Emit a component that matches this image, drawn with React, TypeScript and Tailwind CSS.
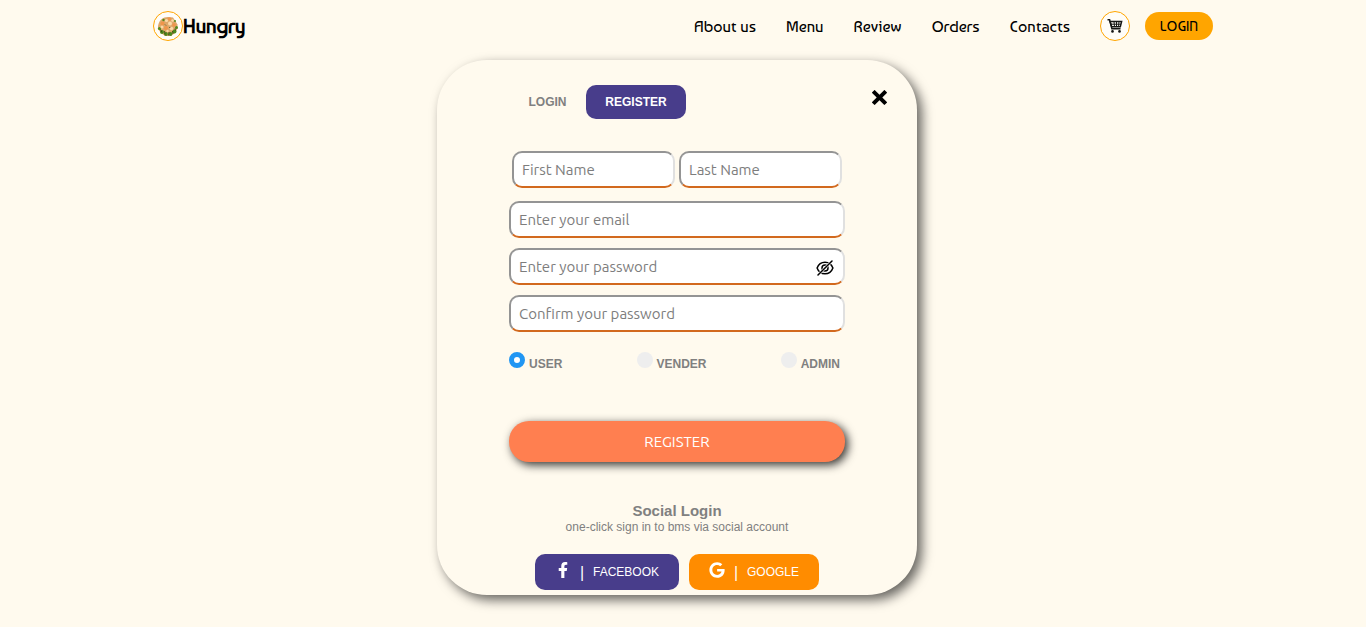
import { useState } from "react";
import { FaFacebookF, FaGoogle } from "react-icons/fa";
import { ImCross } from "react-icons/im";

const navLinks = ["About us", "Menu", "Review", "Orders", "Contacts"];
const roles = ["USER", "VENDER", "ADMIN"];

const field =
  "h-[37px] w-full min-w-0 rounded-[10px] border-2 border-t-[#949494] border-l-[#949494] border-r-[#e0e0e0] border-b-[#d2691e] bg-white px-2 text-[15px] text-black outline-none placeholder:text-[#7d7d7d] placeholder:opacity-100 font-['Ubuntu','Noto_Sans',sans-serif]";

function BowlLogo() {
  return (
    <svg viewBox="0 0 30 30" className="size-[30px] shrink-0" aria-hidden="true">
      <circle cx="15" cy="15" r="14.5" fill="#fffdf8" stroke="#ffa500" />
      <path d="M5 15C6 9 10 6 15 6l5 .5 2 3 2.500 4v4L22 22l-4 3h-6l-4-3-3-4z" fill="#dda76a" />
      <g fill="#4f8a1e">
        <circle cx="6.500" cy="17.500" r="1.600" />
        <circle cx="9" cy="21" r="2" />
        <circle cx="13" cy="23" r="1.900" />
        <circle cx="17.500" cy="23" r="1.900" />
        <circle cx="21.500" cy="20.500" r="2" />
        <circle cx="23.500" cy="16.500" r="1.500" />
        <circle cx="10.500" cy="9" r="1.200" />
        <circle cx="22" cy="10" r="1" />
      </g>
      <g fill="#f0954a">
        <circle cx="9.500" cy="12.500" r="2" />
        <circle cx="16.500" cy="8" r="1.800" />
        <circle cx="21" cy="14" r="1.800" />
        <circle cx="13" cy="17" r="2" />
      </g>
      <g fill="#fbd9a8">
        <circle cx="13.500" cy="9.500" r="1.600" />
        <circle cx="17" cy="12.500" r="2" />
        <circle cx="9" cy="16" r="1.500" />
        <circle cx="18.500" cy="17.500" r="1.700" />
        <circle cx="14.500" cy="20" r="1.200" />
        <circle cx="19.500" cy="9.500" r="1.200" />
      </g>
      <path d="M12 13.500l1 1M16.500 16l.5 1M7.500 18.500l1.500 3M11.500 20l.5 3.500M16 21l-.5 3.500M19.500 20l.5 3M22 17.500l.5 2" stroke="#2c3f10" strokeWidth=".8" />
    </svg>
  );
}

function CartIcon() {
  return (
    <svg viewBox="0 0 16 16" className="size-4" fill="none" stroke="#151515" aria-hidden="true">
      <path d="M.5 1.700h2.100l2.300 9.100h8.600" strokeWidth="1.500" />
      <path d="M3 3.600H14.600L13.300 8.700H4.700z" strokeWidth="1.500" />
      <path d="M3.900 6.200H14M7 3.600l.5 5M9.500 3.600v5M12 3.600l-.5 5" strokeWidth="1" />
      <circle cx="5.500" cy="13.400" r="1.300" fill="#151515" stroke="none" />
      <circle cx="12.500" cy="13.400" r="1.300" fill="#151515" stroke="none" />
    </svg>
  );
}

function EyeOffIcon() {
  return (
    <svg viewBox="0 0 18 16" className="h-4 w-[18px]" fill="none" stroke="#000" strokeWidth="1.500" strokeLinecap="round" aria-hidden="true">
      <path d="M1.100 8C2.500 4.200 5.500 2.200 9 2.200S15.500 4.200 16.900 8C15.500 11.800 12.500 13.800 9 13.800S2.500 11.800 1.100 8z" />
      <circle cx="9" cy="8" r="3" />
      <path d="M3 14L15 2" stroke="#fff" strokeWidth="2.600" />
      <path d="M2 15L16 1" />
    </svg>
  );
}

export default function App() {
  const [role, setRole] = useState("USER");
  const [showPassword, setShowPassword] = useState(false);

  return (
    <div className="min-h-screen bg-[#fffaee] font-['Liberation_Sans',Arial,sans-serif]">
      <header className="mx-auto flex h-[52px] max-w-[1060px] items-center justify-between font-['Baumans','Lato',sans-serif] text-black">
        <a href="#home" className="flex items-center text-xl font-bold">
          <BowlLogo />
          Hungry
        </a>
        <div className="flex items-center">
          <nav className="flex gap-[30px] pt-0.5 text-base">
            {navLinks.map((label) => (
              <a key={label} href={`#${label}`} className="whitespace-nowrap">
                {label}
              </a>
            ))}
          </nav>
          <button type="button" aria-label="Cart" className="ml-[30px] flex size-[30px] items-center justify-center rounded-full border border-[#ffa500] bg-[#fffdf8]">
            <CartIcon />
          </button>
          <button type="button" className="ml-[15px] h-7 w-[68px] rounded-full bg-[#ffa500] text-sm">
            LOGIN
          </button>
        </div>
      </header>

      <main className="pt-2 pr-7 pb-8 pl-4">
        <section className="mx-auto max-w-[480px] rounded-[50px] bg-[#fffaee] px-[72px] pt-[25px] pb-[5px] text-[#808080] shadow-[5px_5px_12px_rgba(0,0,0,0.6)]">
          <div className="-mr-[42px] flex items-start justify-between">
            <div className="flex text-xs font-bold">
              <button type="button" className="h-[34px] w-[77px]">LOGIN</button>
              <button type="button" className="h-[34px] w-[100px] rounded-[10px] bg-[#483d8b] text-white">REGISTER</button>
            </div>
            <button type="button" aria-label="Close" className="pt-[5px] text-black">
              <ImCross className="size-[15px]" />
            </button>
          </div>

          <form className="mt-8" onSubmit={(e) => e.preventDefault()}>
            <div className="flex gap-1 px-[3px]">
              <input aria-label="First Name" placeholder="First Name" className={field} />
              <input aria-label="Last Name" placeholder="Last Name" className={field} />
            </div>
            <div className="mt-[13px] flex flex-col gap-[10px]">
              <input type="email" aria-label="Email" placeholder="Enter your email" className={field} />
              <div className="relative">
                <input type={showPassword ? "text" : "password"} aria-label="Password" placeholder="Enter your password" className={`${field} block`} />
                <button type="button" aria-label="Show password" onClick={() => setShowPassword(!showPassword)} className="absolute top-3 right-[11px]">
                  <EyeOffIcon />
                </button>
              </div>
              <input type="password" aria-label="Confirm password" placeholder="Confirm your password" className={field} />
            </div>

            <div className="mt-5 flex justify-between pr-[5px]">
              {roles.map((r) => (
                <label key={r} className="flex gap-1 text-xs font-bold">
                  <input
                    type="radio"
                    name="role"
                    checked={role === r}
                    onChange={() => setRole(r)}
                    className="size-4 appearance-none rounded-full bg-[#eeeeee] checked:border-[5px] checked:border-[#2196f3] checked:bg-white"
                  />
                  <span className="pt-1">{r}</span>
                </label>
              ))}
            </div>

            <button type="submit" className="mt-[49px] h-[41px] w-full rounded-[20px] bg-[#ff7f50] pt-0.5 font-['Ubuntu','Noto_Sans',sans-serif] text-[15px] text-white shadow-[3px_3px_10px_rgba(0,0,0,0.8)]">
              REGISTER
            </button>
          </form>

          <div className="mt-10 text-center">
            <h2 className="text-[15px] leading-[18px] font-bold">Social Login</h2>
            <p className="text-xs leading-[14px]">one-click sign in to bms via social account</p>
          </div>

          <div className="mt-5 flex justify-center gap-[10px] text-xs text-white">
            <button type="button" className="flex h-9 w-36 items-center rounded-[10px] bg-[#483d8b] pl-5">
              <FaFacebookF className="mb-1 size-4" />
              <span className="w-[22px] px-2 pt-0.5 text-base">|</span>
              <span>FACEBOOK</span>
            </button>
            <button type="button" className="flex h-9 w-[130px] items-center rounded-[10px] bg-[#ff8c00] pl-5">
              <FaGoogle className="mb-1 size-4" />
              <span className="w-[22px] px-2 pt-0.5 text-base">|</span>
              <span>GOOGLE</span>
            </button>
          </div>
        </section>
      </main>
    </div>
  );
}
